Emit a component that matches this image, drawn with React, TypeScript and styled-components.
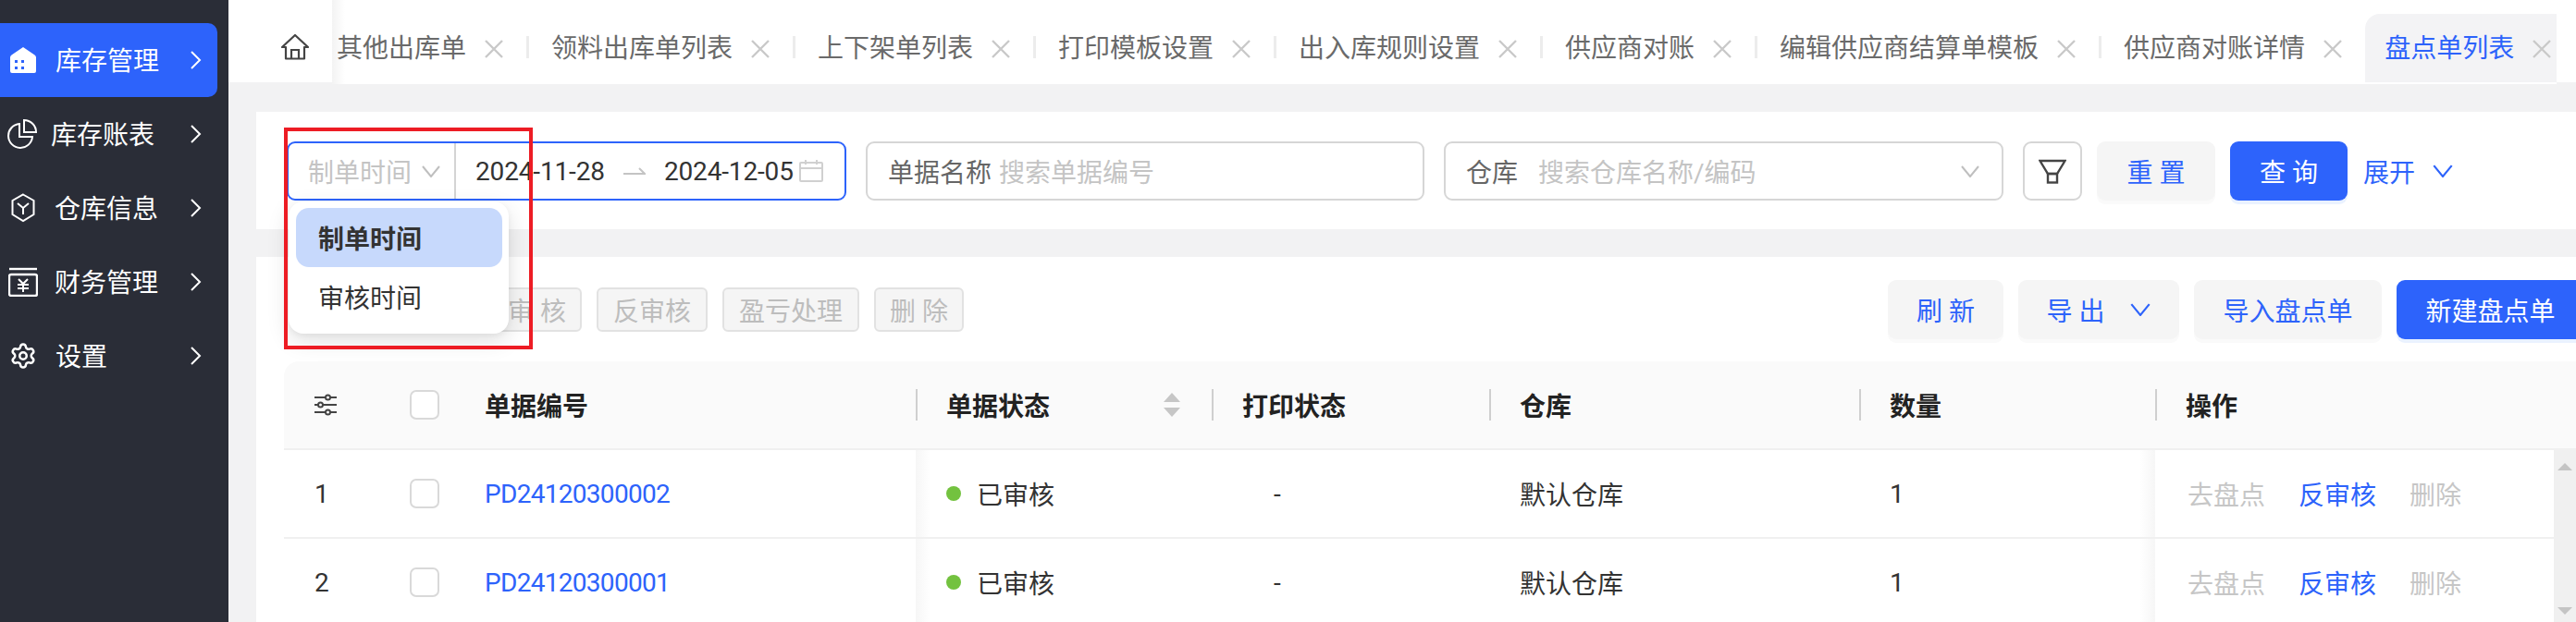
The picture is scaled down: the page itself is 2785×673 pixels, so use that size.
import React from "react";
import styled, { createGlobalStyle } from "styled-components";
import { Settings } from "lucide-react";

const Global = createGlobalStyle`
  html, body { margin: 0; padding: 0; width: 2785px; height: 673px; overflow: hidden; background: #f2f2f3; }
  * { box-sizing: border-box; }
  body { font-family: Roboto, "Noto Sans CJK SC", sans-serif; font-size: 28px; color: #333; }
`;

const Page = styled.div`display: flex; width: 2785px; height: 673px; overflow: hidden;`;

/* ---------- sidebar ---------- */
const Sidebar = styled.nav`width: 247px; flex: none; background: #2a2d37; padding: 25px 12px 0 0; color: #fff;`;
const NavItem = styled.div<{ $active?: boolean; $pad: number; $gap: number }>`
  display: flex; align-items: center; height: 80px; padding: 0 17px 0 ${p => p.$pad}px;
  border-radius: 0 10px 10px 0; background: ${p => (p.$active ? "#2d63fb" : "transparent")};
  svg.nav-icon { flex: none; margin-right: ${p => p.$gap}px; }
`;
const NavLabel = styled.span`flex: 1; line-height: 40px; white-space: nowrap; padding-top: 4px;`;

/* ---------- tabs ---------- */
const Main = styled.div`flex: 1; min-width: 0; display: flex; flex-direction: column;`;
const TabBar = styled.div`height: 89px; flex: none; display: flex; align-items: flex-start; background: #fff; position: relative; z-index: 2;`;
const HomeTab = styled.div`width: 112px; height: 89px; flex: none; display: flex; align-items: center; justify-content: center; padding: 12px 0 0 32px; background: #fff;`;
const TabStrip = styled.div`
  width: 2405px; height: 91px; flex: none; display: flex; overflow: hidden; padding-top: 15px;
  background: linear-gradient(to right, #f3f3f3, #fff 14px);
`;
const Tab = styled.div<{ $active?: boolean; $first?: boolean }>`
  flex: none; height: 74px; display: flex; align-items: center;
  padding: 2px 25px 0 ${p => (p.$first ? 5 : p.$active ? 21 : 24)}px;
  gap: 20px; white-space: nowrap; line-height: 1;
  color: ${p => (p.$active ? "#2d63fb" : "#6a6a6a")};
  background: ${p => (p.$active ? "#f3f3f5" : "transparent")};
  border-radius: ${p => (p.$active ? "16px 0 0 0" : "0")};
`;
const TabDivider = styled.i`flex: none; width: 3px; height: 24px; margin-top: 24px; background: #ececec;`;
const Content = styled.div`flex: 1; min-height: 0; padding: 32px 0 0 30px; background: #f2f2f3;`;

/* ---------- filter ---------- */
const FilterPanel = styled.section`height: 127px; background: #fff; padding: 32px 0 0 33px; display: flex; gap: 21px; align-items: flex-start; width: 2600px;`;
const RangePicker = styled.div`
  width: 605px; height: 64px; flex: none; display: flex; align-items: center;
  border: 2px solid #2d63fb; border-radius: 9px; background: #fff;
`;
const RangeSelect = styled.div`
  width: 181px; height: 60px; flex: none; display: flex; align-items: center; gap: 11px; padding-left: 21px;
  color: #c4c4c4; border-right: 2px solid #d4d4d4; white-space: nowrap;
`;
const DateText = styled.span`color: #333; white-space: nowrap; letter-spacing: -0.15px;`;
const DateBody = styled.div`
  flex: 1; display: flex; align-items: center; padding-left: 21px; gap: 20px;
  svg:last-child { margin-left: -14px; }
`;
const Field = styled.div<{ $w: number }>`
  width: ${p => p.$w}px; height: 64px; flex: none; display: flex; align-items: center; padding: 0 24px 0 22px;
  border: 2px solid #d6d6d6; border-radius: 9px; background: #fff; white-space: nowrap;
`;
const FieldLabel = styled.span<{ $gap: number }>`color: #666; margin-right: ${p => p.$gap}px;`;
const Placeholder = styled.span`color: #c4c4c4; flex: 1;`;
const IconBtn = styled.div`width: 64px; height: 64px; flex: none; display: flex; align-items: center; justify-content: center; border: 2px solid #d6d6d6; border-radius: 9px; background: #fff;`;
const ActionGroup = styled.div`display: flex; align-items: center; gap: 16px; margin-left: -5px;`;
const Btn = styled.div<{ $primary?: boolean; $w: number; $gap?: number }>`
  width: ${p => p.$w}px; height: 64px; flex: none; display: flex; align-items: center; justify-content: center;
  gap: ${p => p.$gap ?? 0}px; border-radius: 9px; white-space: pre;
  color: ${p => (p.$primary ? "#fff" : "#2d63fb")};
  background: ${p => (p.$primary ? "#2d63fb" : "#f5f5f5")};
  box-shadow: 0 4px 0 ${p => (p.$primary ? "#eaf2ff" : "#fafafa")};
`;
const ExpandLink = styled.div`display: flex; align-items: center; height: 64px; gap: 19px; color: #2d63fb; margin-left: -4px;`;

/* ---------- table panel ---------- */
const TablePanel = styled.section`height: 395px; width: 2600px; margin-top: 30px; background: #fff; padding: 25px 0 0 30px; overflow: hidden;`;
const Toolbar = styled.div`display: flex; align-items: center; height: 64px; width: 2487px; padding-left: 3px; margin-bottom: 24px;`;
const BatchGroup = styled.div`display: flex; gap: 16px; margin-left: 222px;`;
const BatchBtn = styled.div<{ $w: number }>`
  width: ${p => p.$w}px; height: 48px; display: flex; align-items: center; justify-content: center; white-space: pre;
  background: #f5f5f5; border: 2px solid #e2e2e2; border-radius: 6px; color: #bdbdbd;
`;
const ToolRight = styled.div`display: flex; gap: 16px; margin-left: auto; flex: none;`;
const TableWrap = styled.div`width: 2478px;`;
const GridRow = styled.div`
  display: grid; grid-template-columns: 136px 81px 466px 320px 300px 400px 320px 1fr;
  height: 96px; border-bottom: 2px solid #f0f0f0; align-items: stretch;
`;
const HeadRow = styled(GridRow)`background: #fafafa; border-radius: 16px 0 0 0; font-weight: 700; color: #222;`;
const HeadCell = styled.div<{ $line?: boolean; $flush?: boolean }>`
  display: flex; align-items: center; padding-left: ${p => (p.$flush ? 0 : 33)}px; position: relative;
  &::before {
    content: ""; display: ${p => (p.$line ? "block" : "none")}; position: absolute; left: 0; top: 30px; width: 2px; height: 34px; background: #cfcfcf;
  }
`;
const PlainCell = styled.div<{ $pad?: number; $shadow?: "left" | "right" }>`
  display: flex; align-items: center; padding-left: ${p => p.$pad ?? 33}px; white-space: nowrap;
  background: ${p => p.$shadow === "left" ? "linear-gradient(to right, #f6f6f6, #fff 16px)" : p.$shadow === "right" ? "linear-gradient(to left, #f6f6f6, #fff 16px)" : "transparent"};
`;
const IndexCell = styled(PlainCell)`padding-left: 33px;`;
const CheckCell = styled.div`display: flex; align-items: center;`;
const Checkbox = styled.i`display: block; width: 32px; height: 32px; border: 2px solid #d9d9d9; border-radius: 7px; background: #fff;`;
const SortIcon = styled.span`position: absolute; right: 34px; top: 34px; display: flex;`;
const DocLink = styled.span`color: #2d63fb; letter-spacing: -0.7px;`;
const Dot = styled.i`width: 16px; height: 16px; border-radius: 50%; background: #73c23f; margin-right: 17px; flex: none;`;
const Actions = styled.div`display: flex; gap: 36px; padding-left: 35px; align-items: center; background: #fff; white-space: nowrap;`;
const ActionText = styled.span<{ $on?: boolean }>`color: ${p => (p.$on ? "#2d63fb" : "#c6c6c6")};`;
const BodyWrap = styled.div`display: flex;`;
const Rows = styled.div`flex: 1; min-width: 0;`;
const Rail = styled.div`
  width: 24px; height: 190px; flex: none; margin-top: -2px; background: #f0f0f0;
  display: flex; flex-direction: column; align-items: center; justify-content: space-between; padding: 16px 0 10px;
`;
const Frame = styled.div`position: absolute; left: 307px; top: 138px; width: 269px; height: 240px; border: 4px solid #ed1c24; z-index: 6; pointer-events: none;`;
const Menu = styled.div`
  position: absolute; left: 312px; top: 218px; width: 238px; height: 143px; z-index: 5; padding: 7px 7px 0 8px;
  background: #fff; border-radius: 16px; box-shadow: 0 8px 24px rgba(0, 0, 0, 0.12), 0 2px 6px rgba(0, 0, 0, 0.05);
`;
const MenuItem = styled.div<{ $on?: boolean }>`
  height: 64px; display: flex; align-items: center; padding-left: 24px; border-radius: 14px;
  background: ${p => (p.$on ? "#c7d9fc" : "transparent")}; font-weight: ${p => (p.$on ? 700 : 400)}; color: #333;
`;

/* ---------- icons ---------- */
const Chevron = ({ color = "#bfbfbf", w = 20, h = 13 }: { color?: string; w?: number; h?: number }) => (
  <svg width={w} height={h} viewBox="0 0 20 13" fill="none" stroke={color} strokeWidth={2} style={{ flex: "none" }}><path d="M1 1l9 11 9-11" /></svg>
);
const NavChevron = () => (
  <svg width="13" height="20" viewBox="0 0 13 20" fill="none" stroke="#fff" strokeWidth={2} style={{ flex: "none" }}><path d="M2 1l9 9-9 9" /></svg>
);
const CloseX = () => (
  <svg width="20" height="20" viewBox="0 0 20 20" stroke="#c9c9c9" strokeWidth={2.4} style={{ flex: "none" }}><path d="M1 1l18 18M19 1L1 19" /></svg>
);
const HouseIcon = () => (
  <svg className="nav-icon" width="30" height="30" viewBox="0 0 30 30">
    <path d="M15 1l12.500 8.500q1.500 1 1.500 2.500v15q0 2-2 2H3q-2 0-2-2V12q0-1.500 1.500-2.500z" fill="#fff" />
    <path d="M6 15h3v3H6zM13 15h3v3h-3zM6 22h3v3H6zM13 22h3v3h-3z" fill="#2d63fb" />
  </svg>
);
const PieIcon = () => (
  <svg className="nav-icon" width="32" height="32" viewBox="0 0 32 32" fill="none" stroke="#fff" strokeWidth={2}>
    <path d="M13 5a13 13 0 1 0 14 14H13z" />
    <path d="M18 1a13 13 0 0 1 13 13H18z" />
  </svg>
);
const BoxIcon = () => (
  <svg className="nav-icon" width="26" height="32" viewBox="0 0 26 32" fill="none" stroke="#fff" strokeWidth={2}>
    <path d="M13 1.500l11.500 6.500v15L13 30 1.500 23V8z" />
    <path d="M7 11l6 5 6-5M13 16v7" />
  </svg>
);
const YenIcon = () => (
  <svg className="nav-icon" width="32" height="32" viewBox="0 0 32 32" fill="none" stroke="#fff" strokeWidth={2.4}>
    <path d="M1 2h30" />
    <rect x="1" y="8" width="30" height="23" rx="2" />
    <path d="M11 13l5 5 5-5M10 19h12M10 23h12M16 18v9" strokeWidth={2} />
  </svg>
);
const HomeIcon = () => (
  <svg width="30" height="30" viewBox="0 0 30 30" fill="none" stroke="#444" strokeWidth={2.2}>
    <path d="M1 15L15 2l14 13h-4v12.500H5V15z" strokeLinejoin="round" />
    <path d="M11 27V18h8v9" />
  </svg>
);
const CalendarIcon = () => (
  <svg width="26" height="24" viewBox="0 0 26 24" fill="none" stroke="#d0d0d0" strokeWidth={2} style={{ flex: "none" }}>
    <rect x="1" y="3" width="24" height="20" rx="1" />
    <path d="M1 9h24M7 0v5M19 0v5" />
  </svg>
);
const RangeArrow = () => (
  <svg width="24" height="8" viewBox="0 0 24 8" fill="none" stroke="#c4c4c4" strokeWidth={2} style={{ flex: "none" }}><path d="M0 7h23L17 1" /></svg>
);
const FunnelIcon = () => (
  <svg width="30" height="27" viewBox="0 0 30 27" fill="none" stroke="#444" strokeWidth={2.4}>
    <path d="M1.500 2h27L20 16H10z" />
    <rect x="10" y="16" width="10" height="9.500" />
  </svg>
);
const TuneIcon = () => (
  <svg width="24" height="24" viewBox="0 0 24 24" fill="none" stroke="#444" strokeWidth={2}>
    <path d="M0 4h12M17 4h7M0 12h4M9 12h15M0 20h12M17 20h7" />
    <circle cx="14.500" cy="4" r="2.500" /><circle cx="6.500" cy="12" r="2.500" /><circle cx="14.500" cy="20" r="2.500" />
  </svg>
);
const SortArrows = () => (
  <svg width="18" height="26" viewBox="0 0 18 26" fill="#c6c6c6"><path d="M9 0l9 10H0zM9 26L0 16h18z" /></svg>
);
const RailUp = () => <svg width="16" height="8" viewBox="0 0 16 8" fill="#c4c4c4"><path d="M8 0l8 8H0z" /></svg>;
const RailDown = () => <svg width="16" height="8" viewBox="0 0 16 8" fill="#c4c4c4"><path d="M8 8L0 0h16z" /></svg>;

const tabs = ["其他出库单", "领料出库单列表", "上下架单列表", "打印模板设置", "出入库规则设置", "供应商对账", "编辑供应商结算单模板", "供应商对账详情"];
const rows = [{ n: 1, id: "PD24120300002" }, { n: 2, id: "PD24120300001" }];
const heads: [string, boolean][] = [["单据编号", false], ["单据状态", true], ["打印状态", true], ["仓库", true], ["数量", true], ["操作", true]];

export default function App() {
  return (
    <Page>
      <Global />
      <Sidebar>
        <NavItem $active $pad={10} $gap={20}><HouseIcon /><NavLabel>库存管理</NavLabel><NavChevron /></NavItem>
        <NavItem $pad={8} $gap={15}><PieIcon /><NavLabel>库存账表</NavLabel><NavChevron /></NavItem>
        <NavItem $pad={12} $gap={21}><BoxIcon /><NavLabel>仓库信息</NavLabel><NavChevron /></NavItem>
        <NavItem $pad={9} $gap={18}><YenIcon /><NavLabel>财务管理</NavLabel><NavChevron /></NavItem>
        <NavItem $pad={10} $gap={20}><Settings className="nav-icon" size={30} color="#fff" strokeWidth={2} /><NavLabel>设置</NavLabel><NavChevron /></NavItem>
      </Sidebar>
      <Main>
        <TabBar>
          <HomeTab><HomeIcon /></HomeTab>
          <TabStrip>
            {tabs.map((t, i) => (
              <React.Fragment key={t}>
                <Tab $first={i === 0}>{t}<CloseX /></Tab>
                {i < tabs.length - 1 && <TabDivider />}
              </React.Fragment>
            ))}
            <Tab $active>盘点单列表<CloseX /></Tab>
          </TabStrip>
        </TabBar>
        <Content>
          <FilterPanel>
            <RangePicker>
              <RangeSelect>制单时间<Chevron /></RangeSelect>
              <DateBody>
                <DateText>2024-11-28</DateText>
                <RangeArrow />
                <DateText>2024-12-05</DateText>
                <CalendarIcon />
              </DateBody>
            </RangePicker>
            <Field $w={604}><FieldLabel $gap={8}>单据名称</FieldLabel><Placeholder>搜索单据编号</Placeholder></Field>
            <Field $w={605}><FieldLabel $gap={22}>仓库</FieldLabel><Placeholder>搜索仓库名称/编码</Placeholder><Chevron /></Field>
            <IconBtn><FunnelIcon /></IconBtn>
            <ActionGroup>
              <Btn $w={128}>重 置</Btn>
              <Btn $w={127} $primary>查 询</Btn>
            </ActionGroup>
            <ExpandLink>展开<Chevron color="#2d63fb" w={22} h={14} /></ExpandLink>
          </FilterPanel>
          <TablePanel>
            <Toolbar>
              <BatchGroup>
                <BatchBtn $w={97}>审 核</BatchBtn>
                <BatchBtn $w={120}>反审核</BatchBtn>
                <BatchBtn $w={148}>盈亏处理</BatchBtn>
                <BatchBtn $w={97}>删 除</BatchBtn>
              </BatchGroup>
              <ToolRight>
                <Btn $w={125}>刷 新</Btn>
                <Btn $w={174} $gap={28}>导 出<Chevron color="#2d63fb" w={22} h={14} /></Btn>
                <Btn $w={203}>导入盘点单</Btn>
                <Btn $w={203} $primary>新建盘点单</Btn>
              </ToolRight>
            </Toolbar>
            <TableWrap>
              <HeadRow>
                <IndexCell><TuneIcon /></IndexCell>
                <CheckCell><Checkbox /></CheckCell>
                {heads.map(([h, line], i) => (
                  <HeadCell key={h} $line={line} $flush={i === 0}>
                    {h}
                    {i === 1 && <SortIcon><SortArrows /></SortIcon>}
                  </HeadCell>
                ))}
              </HeadRow>
              <BodyWrap>
                <Rows>
                  {rows.map(r => (
                    <GridRow key={r.n}>
                      <IndexCell>{r.n}</IndexCell>
                      <CheckCell><Checkbox /></CheckCell>
                      <PlainCell $pad={0}><DocLink>{r.id}</DocLink></PlainCell>
                      <PlainCell $shadow="left"><Dot />已审核</PlainCell>
                      <PlainCell $pad={67}>-</PlainCell>
                      <PlainCell>默认仓库</PlainCell>
                      <PlainCell $shadow="right">1</PlainCell>
                      <Actions>
                        <ActionText>去盘点</ActionText>
                        <ActionText $on>反审核</ActionText>
                        <ActionText>删除</ActionText>
                      </Actions>
                    </GridRow>
                  ))}
                </Rows>
                <Rail><RailUp /><RailDown /></Rail>
              </BodyWrap>
            </TableWrap>
          </TablePanel>
        </Content>
      </Main>
      <Menu>
        <MenuItem $on>制单时间</MenuItem>
        <MenuItem>审核时间</MenuItem>
      </Menu>
      <Frame />
    </Page>
  );
}
